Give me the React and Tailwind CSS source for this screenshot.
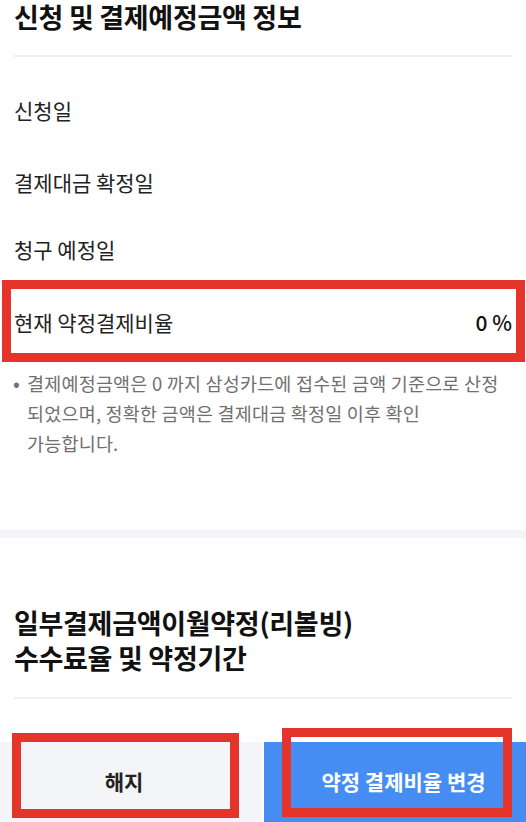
export default function App() {
  const rows = [
    { label: "신청일", h: "h-[70px]" },
    { label: "결제대금 확정일", h: "h-[74px]" },
    { label: "청구 예정일", h: "h-[60px]" },
  ];

  return (
    <div className="w-[526px] h-[822px] overflow-hidden bg-white font-['Noto_Sans_CJK_KR','Noto_Sans',sans-serif] text-[#222]">
      {/* 신청 및 결제예정금액 정보 */}
      <section className="px-[14px] pb-[72px] pr-[14px]">
        <h2 className="text-[27px] leading-[34px] font-bold text-[#111] tracking-[-0.3px]">
          신청 및 결제예정금액 정보
        </h2>
        <div className="mt-[21px] h-[2px] bg-[#f0f0f0]" />

        <div className="mt-[19px]">
          {rows.map((row) => (
            <div key={row.label} className={`${row.h} flex items-center`}>
              <span className="text-[21px] text-[#222]">{row.label}</span>
            </div>
          ))}
          <div className="relative h-[82px] flex items-center justify-between pt-[3px]">
            <span className="text-[21px] text-[#222]">현재 약정결제비율</span>
            <span className="text-[21px] font-medium text-[#111]">0 %</span>
            <div className="absolute top-0 bottom-0 -left-[12px] -right-[13px] border-[9px] border-[#e5352a]" />
          </div>
        </div>

        <div className="mt-[6px] flex text-[18.5px] leading-[30px] text-[#707070]">
          <span className="w-[14px] shrink-0 text-[20px] -ml-[1px]">•</span>
          <p className="break-keep tracking-[0.2px]">
            결제예정금액은 0 까지 삼성카드에 접수된 금액 기준으로 산정
            <br />
            되었으며, 정확한 금액은 결제대금 확정일 이후 확인
            <br />
            가능합니다.
          </p>
        </div>
      </section>

      <div className="h-[8px] bg-[#f4f5f8]" />

      {/* 리볼빙 */}
      <section className="px-[14px] pt-[67px]">
        <h2 className="text-[27px] leading-[35px] font-bold text-[#111] tracking-[-0.3px]">
          일부결제금액이월약정(리볼빙)
          <br />
          수수료율 및 약정기간
        </h2>
        <div className="mt-[22px] h-[2px] bg-[#f0f0f0]" />
      </section>

      <div className="mt-[43px] flex h-[80px] gap-[2px]">
        <button className="relative w-[262px] bg-[#f4f5f8] pr-[14px] text-[21px] font-bold text-[#222]">
          해지
          <span className="absolute -top-[9px] left-[12px] w-[227px] h-[85px] border-[9px] border-[#e5352a]" />
        </button>
        <button className="relative flex-1 bg-[#468df3] pl-[17px] text-[21px] font-bold text-white">
          약정 결제비율 변경
          <span className="absolute -top-[14px] left-[18px] w-[230px] h-[89px] border-[9px] border-[#e5352a]" />
        </button>
      </div>
    </div>
  );
}
